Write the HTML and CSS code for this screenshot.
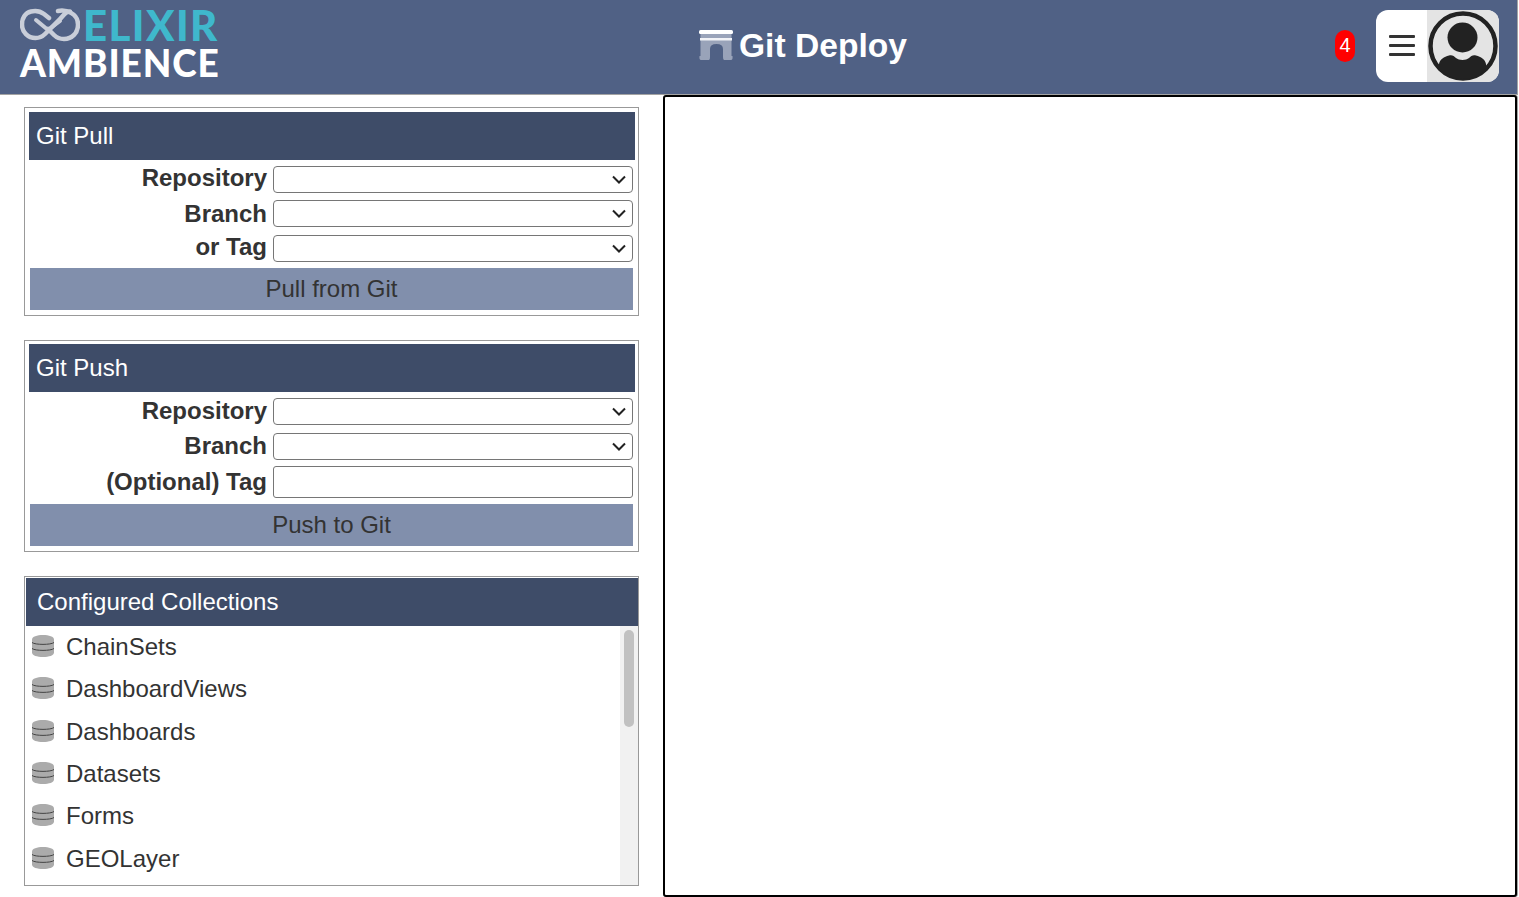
FILE: index.html
```html
<!DOCTYPE html>
<html lang="en">
<head>
<meta charset="utf-8">
<title>Git Deploy</title>
<link rel="stylesheet" href="styles.css">
</head>
<body>
<header class="topbar">
  <div class="logo">
    <div class="logo-top">
      <svg class="logo-mark" viewBox="0 0 60 34" width="60" height="34" fill="none" stroke="#c9ced9" stroke-width="4.5" stroke-linecap="round" stroke-linejoin="round">
        <path d="M29 10 L24 6 C20 3 15 2.5 11 3.5 C5 5 2 10.5 2 16.5 C2 24 8 30 15.5 30 C19 30 22 29 25 26 L40 11 C43 8 46 3 50 3.5"/>
        <path d="M38 3 C46 1.5 58 5 58 16.5 C58 25 52 31 44 31 C40 31 37 30 34 27 L28 21"/>
        <path d="M16 12 L28 22 L40 13" stroke-width="4"/>
      </svg>
      <span class="logo-elixir">ELIXIR</span>
    </div>
    <div class="logo-ambience">AMBIENCE</div>
  </div>
  <div class="page-title">
    <svg class="arch" viewBox="0 0 34 30" width="34" height="30">
      <path d="M1.500 4 H32.500 V26 H33.500 Q34 30 32 30 H25 Q24 30 24 27 V19 Q24 14 17.500 14 Q11 14 11 19 V27 Q11 30 10 30 H2 Q0 30 0.500 26 H1.500 Z" fill="#99a3b9"/>
      <rect x="0" y="0" width="34" height="4" rx="1.500" fill="#fff"/>
      <rect x="1" y="8" width="32" height="2.500" fill="#f2f3f7"/>
    </svg>
    <span class="page-title-text">Git Deploy</span>
  </div>
  <div class="top-actions">
    <span class="badge">4</span>
    <div class="user-box">
      <div class="hamburger"><i></i><i></i><i></i></div>
      <div class="avatar">
        <svg viewBox="0 0 72 72" width="72" height="72">
          <circle cx="36" cy="36" r="32.500" fill="#e4e4e4" stroke="#222" stroke-width="4.500"/>
          <circle cx="35.500" cy="27.500" r="15" fill="#222"/>
          <path d="M12 58 V54 C13 49 17 47 22 45.500 C25 44.500 27 46 29 48 C32 50.500 39 50.500 42 48 C44 46 46 44.500 49 45.500 C54 47 58 49 59 54 V58 C54 65 46 69 36 69 C26 69 17 65 12 58 Z" fill="#222"/>
        </svg>
      </div>
    </div>
  </div>
</header>
<main class="layout">
  <aside class="sidebar">
    <section class="panel panel-pull">
      <h2 class="panel-title">Git Pull</h2>
      <div class="form-row"><label class="form-label">Repository</label><select class="field field-select"></select></div>
      <div class="form-row"><label class="form-label label-low">Branch</label><select class="field field-select"></select></div>
      <div class="form-row"><label class="form-label">or Tag</label><select class="field field-select"></select></div>
      <button class="action">Pull from Git</button>
    </section>
    <section class="panel panel-push">
      <h2 class="panel-title">Git Push</h2>
      <div class="form-row"><label class="form-label">Repository</label><select class="field field-select"></select></div>
      <div class="form-row"><label class="form-label label-low">Branch</label><select class="field field-select"></select></div>
      <div class="form-row form-row-input"><label class="form-label label-low">(Optional) Tag</label><input class="field field-text" type="text"></div>
      <button class="action">Push to Git</button>
    </section>
    <section class="panel panel-collections">
      <h2 class="collections-title">Configured Collections</h2>
      <div class="collection-body">
        <ul class="collection-list">
          <li class="collection"><svg class="db" viewBox="0 0 22 22"><use href="#db-icon"/></svg>ChainSets</li>
          <li class="collection"><svg class="db" viewBox="0 0 22 22"><use href="#db-icon"/></svg>DashboardViews</li>
          <li class="collection"><svg class="db" viewBox="0 0 22 22"><use href="#db-icon"/></svg>Dashboards</li>
          <li class="collection"><svg class="db" viewBox="0 0 22 22"><use href="#db-icon"/></svg>Datasets</li>
          <li class="collection"><svg class="db" viewBox="0 0 22 22"><use href="#db-icon"/></svg>Forms</li>
          <li class="collection"><svg class="db" viewBox="0 0 22 22"><use href="#db-icon"/></svg>GEOLayer</li>
        </ul>
        <div class="scroll-track"><div class="scroll-thumb"></div></div>
      </div>
    </section>
  </aside>
  <div class="workspace"></div>
</main>
<svg class="sprite" width="0" height="0">
  <symbol id="db-icon" viewBox="0 0 22 22">
    <path d="M0 4.500 C0 1.500 5 0 11 0 C17 0 22 1.500 22 4.500 V17.500 C22 20.500 17 22 11 22 C5 22 0 20.500 0 17.500 Z" fill="#ababab"/>
    <path d="M0 7.500 C3 10 19 10 22 7.500 M0 13.500 C3 16 19 16 22 13.500" fill="none" stroke="#444" stroke-width="1"/>
  </symbol>
</svg>
</body>
</html>
```
FILE: styles.css
```css
* { box-sizing: border-box; }
html, body { margin: 0; height: 100%; overflow: hidden; }
body { font-family: "Liberation Sans", Arial, sans-serif; color: #333; background: #fff; }

.topbar {
  height: 95px;
  display: grid;
  grid-template-columns: 1fr 1fr 1fr;
  align-items: center;
  background: #506185;
  border-bottom: 1px solid #a3a3a3;
  border-right: 1px solid #a3a3a3;
  margin-right: 1px;
  padding: 0 18px 2px 20px;
}
.logo { display: flex; flex-direction: column; width: 200px; margin-top: -6px; }
.logo-top { display: flex; align-items: center; height: 38px; }
.logo-mark { flex: none; }
.logo-elixir {
  font-family: Lato, sans-serif;
  font-weight: 900;
  font-size: 42px;
  line-height: 38px;
  color: #3fb8cc;
  margin-left: 3px;
  letter-spacing: 1.400px;
}
.logo-ambience {
  font-family: Lato, sans-serif;
  font-weight: 900;
  font-size: 37px;
  line-height: 36px;
  color: #fff;
  margin-top: 1px;
  letter-spacing: 0.900px;
  white-space: nowrap;
}
.page-title { display: flex; align-items: center; justify-content: flex-start; padding-left: 186px; gap: 6px; white-space: nowrap; margin-top: -1px; }
.arch { flex: none; margin-top: -1px; }
.page-title-text { font-weight: 700; font-size: 33.600px; color: #fff; line-height: 40px; }
.top-actions { display: flex; justify-content: flex-end; align-items: center; gap: 21px; }
.badge {
  width: 20px; height: 32px;
  background: #f00;
  color: #fff;
  border-radius: 10px;
  font-size: 20px;
  line-height: 31px;
  text-align: center;
}
.user-box {
  width: 123px; height: 72px;
  display: flex;
  background: #fff;
  border-radius: 12px;
  overflow: hidden;
}
.hamburger { width: 51px; padding-bottom: 2px; display: flex; flex-direction: column; justify-content: center; align-items: center; gap: 6px; }
.hamburger i { display: block; width: 26px; height: 3px; background: #333; border-radius: 1px; }
.avatar { width: 72px; height: 72px; background: #e4e4e4; }
.avatar svg { display: block; }

.layout { display: flex; height: 802px; }
.sidebar { width: 663px; flex: none; padding: 12px 24px 0; display: flex; flex-direction: column; gap: 24px; }
.panel { border: 1px solid #999; background: #fff; display: flex; flex-direction: column; }
.panel-pull { height: 209px; }
.panel-push { height: 212px; }
.panel-collections { height: 310px; }
.panel-title {
  margin: 4px 3px 2px 4px;
  height: 48px;
  background: #3e4c68;
  color: #fff;
  font-size: 24px;
  font-weight: 400;
  line-height: 48px;
  padding-left: 7px;
}
.panel-push .panel-title { margin-top: 3px; margin-bottom: 2.500px; }
.form-row { display: flex; align-items: center; height: 34.500px; padding-right: 5px; flex: none; }
.form-row-input { height: 37px; }
.form-label {
  flex: none;
  width: 248px;
  padding-right: 6px;
  text-align: right;
  font-weight: 700;
  font-size: 24px;
  line-height: 28px;
  margin-top: -3px;
  color: #333;
}
.panel-pull .label-low { margin-top: 1px; }
.panel-push .form-label { margin-top: -2px; }
.panel-push .label-low { margin-top: 0; }
.field {
  flex: 1;
  min-width: 0;
  height: 27px;
  background: #fff;
  border: 1px solid #767676;
  border-radius: 4px;
  font-size: 24px;
  padding: 0;
}
.field-select {
  appearance: none;
  background-image: url("data:image/svg+xml,%3Csvg xmlns='http://www.w3.org/2000/svg' width='14' height='9' viewBox='0 0 14 9'%3E%3Cpath d='M1 1.500 L7 7.500 L13 1.500' fill='none' stroke='%23222' stroke-width='2'/%3E%3C/svg%3E");
  background-repeat: no-repeat;
  background-position: right 6px center;
}
.field-text { height: 32px; border-radius: 3px; }
.action {
  display: block;
  margin: 2.500px 5px 0;
  height: 42px;
  border: 0;
  background: #818fac;
  color: #333;
  font-family: inherit;
  font-size: 24px;
  padding: 0;
}
.panel-push .action { margin-top: 3.500px; }
.collections-title {
  margin: 1px 0 0 1px;
  height: 48px;
  background: #3e4c68;
  color: #fff;
  font-size: 24px;
  font-weight: 400;
  line-height: 48px;
  padding-left: 11px;
  flex: none;
}
.collection-body { flex: 1; min-height: 0; display: flex; }
.collection-list {
  list-style: none;
  margin: 0;
  padding: 0;
  flex: 1;
  min-width: 0;
}
.scroll-track { width: 18px; flex: none; background: #f1f1f1; padding: 4px; }
.scroll-thumb { height: 97px; background: #c1c1c1; border-radius: 5px; }
.collection {
  display: flex;
  align-items: center;
  gap: 12px;
  height: 42.330px;
  padding-left: 7px;
  font-size: 24px;
  color: #333;
}
.db { width: 22px; height: 22px; flex: none; margin-top: -2px; }
.sprite { position: absolute; }

.workspace {
  width: 854px;
  height: 802px;
  flex: none;
  border: 2px solid #000;
  border-radius: 3px;
  background: #fff;
  box-shadow: 1px 0 0 #a3a3a3;
}
```
